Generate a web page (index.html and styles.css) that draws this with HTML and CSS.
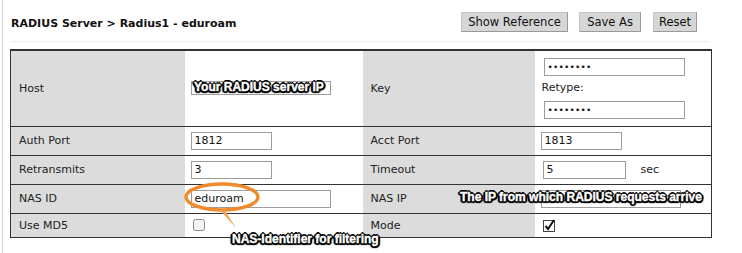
FILE: index.html
```html
<!DOCTYPE html>
<html>
<head>
<meta charset="utf-8">
<link rel="stylesheet" href="styles.css">
</head>
<body>
<div class="frame">
  <div class="header">
    <div class="title">RADIUS Server &gt; Radius1 - eduroam</div>
    <div class="buttons">
      <button class="btn b-ref">Show Reference</button>
      <button class="btn b-save">Save As</button>
      <button class="btn b-reset">Reset</button>
    </div>
  </div>
  <table class="grid">
    <colgroup>
      <col class="c1"><col class="c2"><col class="c3"><col class="c4">
    </colgroup>
    <tr class="tall">
      <td class="lbl">Host</td>
      <td class="val"><span class="input wide small"></span></td>
      <td class="lbl">Key</td>
      <td class="val key">
        <span class="input key-in">••••••••</span>
        <div class="retype">Retype:</div>
        <span class="input key-in">••••••••</span>
      </td>
    </tr>
    <tr>
      <td class="lbl">Auth Port</td>
      <td class="val"><span class="input short">1812</span></td>
      <td class="lbl">Acct Port</td>
      <td class="val"><span class="input short">1813</span></td>
    </tr>
    <tr>
      <td class="lbl">Retransmits</td>
      <td class="val"><span class="input short">3</span></td>
      <td class="lbl">Timeout</td>
      <td class="val"><span class="input short sh2">5</span><span class="unit">sec</span></td>
    </tr>
    <tr>
      <td class="lbl">NAS ID</td>
      <td class="val"><span class="input wide">eduroam</span></td>
      <td class="lbl">NAS IP</td>
      <td class="val"><span class="input wide"></span></td>
    </tr>
    <tr class="last">
      <td class="lbl">Use MD5</td>
      <td class="val"><svg class="cb" width="12" height="12" viewBox="0 0 12 12"><rect x="0.5" y="0.5" width="11" height="11" rx="2" fill="#f4f4f4" stroke="#8a8a8a"/></svg></td>
      <td class="lbl">Mode</td>
      <td class="val"><svg class="cb" width="13" height="13" viewBox="0 0 13 13"><rect x="0.5" y="1.5" width="11" height="11" fill="#fff" stroke="#444"/><path d="M2.5 7 L5 10 L11 1" fill="none" stroke="#111" stroke-width="2"/></svg></td>
    </tr>
  </table>

  <div class="note n-host">Your RADIUS server IP</div>
  <div class="note n-nasip">The IP from which RADIUS requests arrive</div>
  <div class="note n-nasid">NAS-Identifier for filtering</div>
  <svg class="ring" width="84" height="52" viewBox="0 0 84 52">
    <ellipse cx="38" cy="15" rx="36" ry="13" fill="none" stroke="#f08a2c" stroke-width="3.4"/>
    <path d="M36 28 L52 46 L41 28.5 Z" fill="#f5a050"/>
  </svg>
</div>
</body>
</html>
```

FILE: styles.css
```css
html, body {
  margin: 0;
  padding: 0;
  background: #fff;
}
body {
  font-family: "DejaVu Sans", Verdana, sans-serif;
  font-size: 11px;
  color: #222;
}
.frame {
  position: relative;
  margin-left: 2px;
  border-left: 1px solid #cfcfcf;
  height: 253px;
  padding-left: 7px;
  box-sizing: border-box;
}
.header {
  width: 700px;
  box-sizing: border-box;
  display: flex;
  justify-content: space-between;
  align-items: center;
  padding: 12px 13px 9px 1px;
  border-bottom: 1px solid #efefef;
}
.title {
  font-weight: bold;
  font-size: 11px;
  color: #111;
  padding-top: 3px;
}
.buttons {
  display: flex;
}
.btn {
  font-family: "DejaVu Sans", Verdana, sans-serif;
  font-size: 11.5px;
  color: #111;
  height: 20px;
  padding: 0;
  text-align: center;
  background: #d6d6d6;
  border: 1px solid #c4c4c4;
  border-right-color: #9a9a9a;
  border-bottom-color: #9a9a9a;
  border-radius: 0;
}
.b-ref { width: 107px; }
.b-save { width: 62px; margin-left: 11px; }
.b-reset { width: 44px; margin-left: 12px; }
.grid {
  margin-top: 7px;
  width: 701px;
  border-collapse: collapse;
  table-layout: fixed;
  border: 1px solid #333;
  border-top-width: 2px;
}
.c1 { width: 174px; }
.c2 { width: 178px; }
.c3 { width: 172px; }
.c4 { width: 177px; }
.grid td {
  height: 29px;
  padding: 0 0 0 6px;
  border-bottom: 1px solid #333;
  vertical-align: middle;
  box-sizing: border-box;
}
.grid tr.tall td { height: 76px; }
.grid tr.last td { border-bottom: none; height: 24px; }
.grid td.lbl {
  background: #dcdcdc;
  padding-left: 8px;
  color: #222;
}
.input {
  display: inline-block;
  box-sizing: border-box;
  height: 18px;
  line-height: 16px;
  border: 1px solid #9c9c9c;
  background: #fff;
  padding: 0 3px;
  vertical-align: middle;
  font-size: 11px;
  color: #111;
}
.short { width: 81px; }
.sh2 { width: 83px; margin-left: 2px; }
.wide { width: 140px; }
.small { height: 14px; }
.key { padding-left: 9px !important; }
.key-in {
  display: block;
  width: 141px;
  font-size: 9px;
  letter-spacing: 0.2px;
}
.retype {
  padding: 4px 0 5px 0;
  margin-left: -2px;
  line-height: 16px;
}
.unit {
  display: inline-block;
  margin-left: 15px;
  vertical-align: middle;
}
.cb {
  display: block;
  margin-left: 2px;
}
.note {
  position: absolute;
  font-family: "Liberation Sans", Arial, sans-serif;
  font-weight: bold;
  font-size: 12px;
  line-height: 14px;
  color: #fff;
  white-space: nowrap;
  -webkit-text-stroke: 0.35px #fff;
  text-shadow:
    1px 0 0 #000, -1px 0 0 #000, 0 1px 0 #000, 0 -1px 0 #000,
    1px 1px 0 #000, -1px -1px 0 #000, 1px -1px 0 #000, -1px 1px 0 #000,
    2px 0 0 #000, -2px 0 0 #000, 0 2px 0 #000, 0 -2px 0 #000,
    2px 1px 1px #000, -2px 1px 1px #000, 1px 2px 1px #000, -1px 2px 1px #000;
}
.n-host { left: 191px; top: 80px; }
.n-nasip { left: 457px; top: 190px; }
.n-nasid { left: 229px; top: 232px; }
.ring {
  position: absolute;
  left: 181px;
  top: 182px;
}
```
